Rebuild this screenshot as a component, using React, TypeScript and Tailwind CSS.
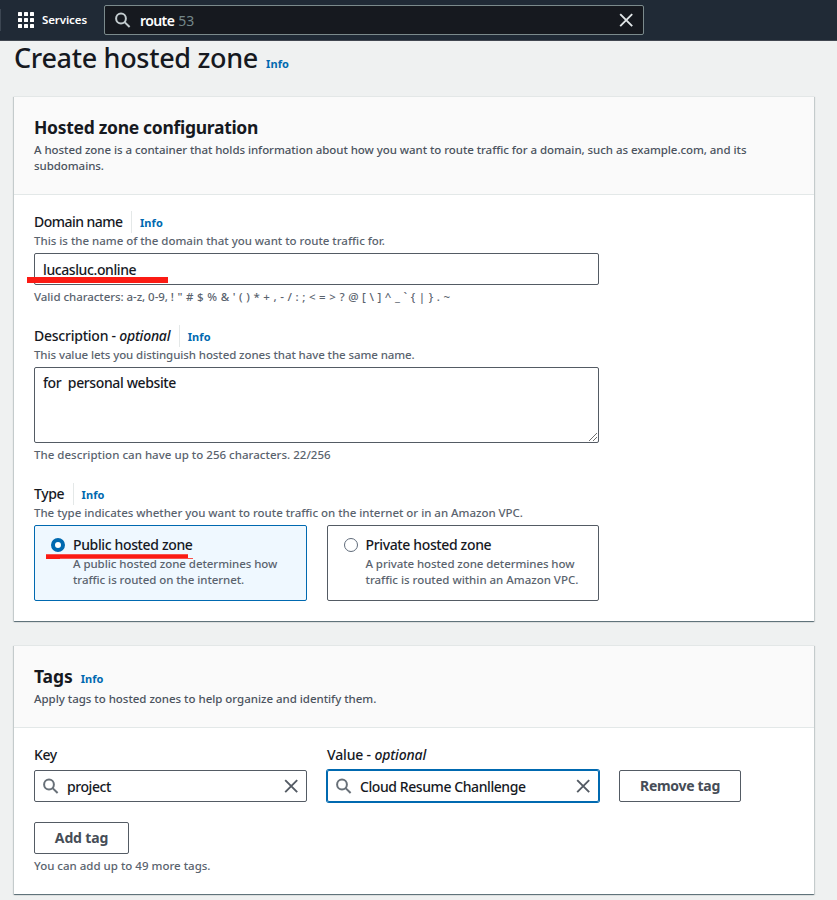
import React from "react";

const SearchIcon = ({ className }: { className: string }) => (
  <svg viewBox="0 0 16 16" width="16" height="16" fill="none" stroke="currentColor" strokeWidth="2" className={className}>
    <circle cx="6" cy="6.5" r="4.9" />
    <path d="M9.6 10.1 14.6 15" />
  </svg>
);

const CloseIcon = ({ className }: { className: string }) => (
  <svg viewBox="0 0 16 16" width="16" height="16" fill="none" stroke="currentColor" strokeWidth="1.9" className={className}>
    <path d="M2.2 2.2l12 12M14.2 2.2L2.2 14.2" />
  </svg>
);

const Info = ({ className = "" }: { className?: string }) => (
  <a className={`text-[11px] font-bold tracking-[0.1px] text-[#0069b0] ${className}`}>Info</a>
);

const Hint = ({
  className = "tracking-[-0.06px]",
  color = "text-[#5a636e]",
  children,
}: {
  className?: string;
  color?: string;
  children: React.ReactNode;
}) => <div className={`h-4 whitespace-pre text-[11.5px] font-medium leading-4 ${color} ${className}`}>{children}</div>;

function Label({ children, className = "" }: { children: React.ReactNode; className?: string }) {
  return (
    <div className="flex h-[22px] items-center">
      <span className={`whitespace-pre text-[14px] font-medium leading-[22px] ${className}`}>{children}</span>
      <span className="ml-[8.5px] h-[22px] w-px bg-[#e4e8e8]" />
      <Info className="ml-2 pt-[2px]" />
    </div>
  );
}

const panel =
  "w-[800px] bg-white border-t border-[#e3e7e7] shadow-[0_1px_1px_0_rgba(0,28,36,0.2),1px_1px_1px_0_rgba(0,28,36,0.15),-1px_1px_1px_0_rgba(0,28,36,0.15),0_1px_0_0_#a9b4bc]";

export default function App() {
  return (
    <div className="h-[900px] w-[837px] overflow-hidden bg-[#eff1f1] font-['Noto_Sans','Open_Sans',sans-serif] text-[#16191f]">
      <header className="flex h-[41px] items-center border-b border-[#414750] bg-[#202a36]">
        <span className="h-[22px] w-px bg-[#3c4652]" />
        <svg width="16" height="16" viewBox="0 0 16 16" fill="#fff" className="ml-[17px]">
          {[0, 6, 12].map((y) => [0, 6, 12].map((x) => <rect key={`${x}-${y}`} x={x} y={y} width="4" height="4" rx=".6" />))}
        </svg>
        <span className="ml-2 w-[62px] text-[11.5px] font-semibold tracking-[-0.1px] text-white">Services</span>
        <div className="flex h-[30px] w-[540px] items-center rounded-[2px] border border-[#7b8a8c] bg-[#16191f] pl-[10px] pr-[9px]">
          <SearchIcon className="text-[#c3cccf]" />
          <span className="ml-[9px] pt-px text-[14px] font-semibold tracking-[-0.6px] text-white">route</span>
          <span className="ml-[4px] pt-px text-[14px] text-[#74878a]">53</span>
          <CloseIcon className="ml-auto text-[#e1e6e8]" />
        </div>
      </header>

      <main className="pl-[14px]">
        <div className="flex h-[55px] items-start">
          <h1 className="mt-[-1px] w-[244px] whitespace-nowrap text-[27px] font-medium leading-[36px] tracking-[-0.32px]">Create hosted zone</h1>
          <Info className="ml-2 pt-[15px]" />
        </div>

        <section className={panel}>
          <div className="h-[98px] border-b border-[#e3e8e8] bg-[#fafafa] px-5 pt-[19px]">
            <h2 className="h-[26px] text-[17.5px] font-bold leading-[22px] tracking-[-0.3px]">Hosted zone configuration</h2>
            <Hint color="text-[#4b535e]">A hosted zone is a container that holds information about how you want to route traffic for a domain, such as example.com, and its</Hint>
            <Hint color="text-[#4b535e]">subdomains.</Hint>
          </div>
          <div className="flex h-[426px] w-[605px] flex-col gap-5 px-5 pt-4">
            <div>
              <Label className="tracking-[-0.54px]">Domain name</Label>
              <Hint className="tracking-[-0.02px]">This is the name of the domain that you want to route traffic for.</Hint>
              <div className="relative my-1 flex h-8 items-center rounded-[2px] border border-[#545b64] px-2 text-[14px] font-medium tracking-[-0.4px]">
                <span>lucasluc.online</span>
                <span className="absolute -left-2 top-[23px] h-[6px] w-[141px] bg-[#fb1b14]" />
              </div>
              <Hint>
                <span className="tracking-[-0.06px]">Valid characters: a-z, 0-9, </span>
                <span className="tracking-[0.3px]">{"! \" # $ % & ' ( ) * + , - / : ; < = > ? @ [ \\ ] ^ _ ` { | } . ~"}</span>
              </Hint>
            </div>
            <div>
              <Label className="tracking-[-0.24px]">
                Description - <i>optional</i>
              </Label>
              <Hint className="tracking-[-0.09px]">This value lets you distinguish hosted zones that have the same name.</Hint>
              <div className="relative my-1 h-[76px] whitespace-pre rounded-[2px] border border-[#545b64] px-2 pt-1 text-[14px] font-medium leading-[22px] tracking-[-0.38px]">
                for  personal website
                <svg className="absolute bottom-px right-px" width="8" height="8" viewBox="0 0 8 8" stroke="#4a4a4a" strokeWidth=".8">
                  <path d="M0 8 8 0M4 8 8 4" />
                </svg>
              </div>
              <Hint className="tracking-[0.02px]">The description can have up to 256 characters. 22/256</Hint>
            </div>
            <div>
              <Label className="tracking-[-0.4px]">Type</Label>
              <Hint className="tracking-[-0.03px]">The type indicates whether you want to route traffic on the internet or in an Amazon VPC.</Hint>
              <div className="mt-1 flex gap-5">
                <div className="relative flex h-[76px] w-[273px] rounded-[2px] border border-[#0069b0] bg-[#eff8ff] pl-4 pt-2">
                  <span className="mt-[4px] h-[14px] w-[14px] rounded-full border-4 border-[#0069b0] bg-white" />
                  <div className="ml-2">
                    <div className="h-[22px] text-[14px] font-medium leading-[22px] tracking-[-0.36px]">Public hosted zone</div>
                    <Hint>A public hosted zone determines how</Hint>
                    <Hint>traffic is routed on the internet.</Hint>
                  </div>
                  <svg className="absolute left-[11px] top-[27px]" width="148" height="7" viewBox="0 0 148 7" fill="#fb1b14">
                    <path d="M0 1.2 142 1.2V5H147V5.7H14V6H0Z" />
                  </svg>
                </div>
                <div className="flex h-[76px] w-[272px] rounded-[2px] border border-[#545b64] pl-4 pt-2">
                  <span className="mt-[4px] h-[14px] w-[14px] rounded-full border border-[#5f6b7a]" />
                  <div className="ml-[7.5px]">
                    <div className="h-[22px] text-[14px] font-medium leading-[22px] tracking-[-0.36px]">Private hosted zone</div>
                    <Hint className="tracking-[-0.08px]">A private hosted zone determines how</Hint>
                    <Hint className="tracking-[-0.02px]">traffic is routed within an Amazon VPC.</Hint>
                  </div>
                </div>
              </div>
            </div>
          </div>
        </section>

        <section className={`mt-6 ${panel}`}>
          <div className="h-[82px] border-b border-[#e3e8e8] bg-[#fafafa] px-5 pt-[19px]">
            <div className="flex h-[26px]">
              <h2 className="text-[17.5px] font-bold leading-[22px] tracking-[-0.1px]">Tags</h2>
              <Info className="ml-2 pt-[6px]" />
            </div>
            <Hint color="text-[#4b535e]" className="tracking-[-0.03px]">Apply tags to hosted zones to help organize and identify them.</Hint>
          </div>
          <div className="h-[166px] px-5 pt-4">
            <div className="flex items-end">
              <div className="w-[273px]">
                <div className="mb-1 text-[14px] font-medium leading-[22px] tracking-[-0.4px]">Key</div>
                <div className="flex h-8 items-center rounded-[2px] border border-[#545b64] px-2">
                  <SearchIcon className="text-[#687078]" />
                  <span className="ml-2 pt-px text-[14px] font-medium tracking-[-0.42px]">project</span>
                  <CloseIcon className="ml-auto mr-[-1px] text-[#545b64]" />
                </div>
              </div>
              <div className="ml-5 w-[272px]">
                <div className="mb-1 text-[14px] font-medium leading-[22px] tracking-[-0.16px]">
                  Value - <i>optional</i>
                </div>
                <div className="flex h-8 items-center rounded-[2px] border border-[#0069b0] px-2 shadow-[0_0_0_1px_#0069b0]">
                  <SearchIcon className="text-[#687078]" />
                  <span className="ml-2 pt-px text-[14px] font-medium tracking-[-0.42px]">Cloud Resume Chanllenge</span>
                  <CloseIcon className="ml-auto mr-[-1px] text-[#545b64]" />
                </div>
              </div>
              <button className="ml-5 h-8 w-[122px] rounded-[2px] border border-[#545b64] pb-px text-[14px] font-bold tracking-[-0.3px] text-[#464d57]">Remove tag</button>
            </div>
            <button className="mb-1 mt-5 block h-8 w-[95px] rounded-[2px] border border-[#545b64] pb-px text-[14px] font-bold tracking-[-0.15px] text-[#464d57]">Add tag</button>
            <Hint className="tracking-[0px]">You can add up to 49 more tags.</Hint>
          </div>
        </section>
      </main>
    </div>
  );
}
